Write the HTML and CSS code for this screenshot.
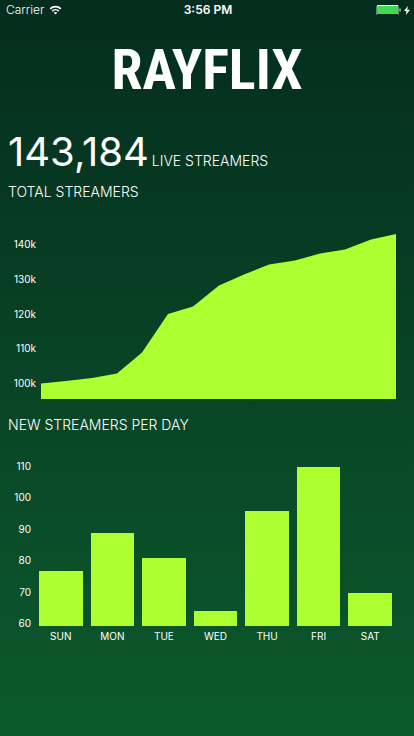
FILE: index.html
```html
<!DOCTYPE html>
<html lang="en">
<head>
<meta charset="utf-8">
<meta name="viewport" content="width=device-width, initial-scale=1">
<title>Rayflix</title>
<link rel="stylesheet" href="styles.css">
</head>
<body>
<header class="status">
  <div class="carrier">
    <span>Carrier</span>
    <svg class="wifi" viewBox="0 0 13 10" aria-hidden="true">
      <path d="M1.2 3.8a7.6 7.6 0 0 1 10.6 0M3.2 6.1a4.7 4.7 0 0 1 6.6 0" fill="none" stroke="#fff" stroke-width="1.7"/>
      <path d="M6.5 9.6 4.7 7.8a2.6 2.6 0 0 1 3.6 0z" fill="#fff"/>
    </svg>
  </div>
  <time class="clock">3:56 PM</time>
  <div class="power">
    <svg class="battery" viewBox="0 0 25 10" aria-hidden="true">
      <rect x="1" y="1" width="21" height="8" fill="#43d854"/>
      <path d="M1 .5h21" stroke="#fff"/>
      <path d="M.5 1v9M22.500 1v9" stroke="#fff" stroke-opacity=".4"/>
      <path d="M24 3.500v3" stroke="#fff"/>
    </svg>
    <svg class="bolt" viewBox="0 0 6 9" aria-hidden="true"><path d="M3.8 0 0 5h2.500L1.800 9 6 3.800H3.300z" fill="#fff"/></svg>
  </div>
</header>
<main>
  <h1 class="logo">RAYFLIX</h1>
  <p class="live"><strong class="count">143,184</strong><span>LIVE STREAMERS</span></p>
  <section>
    <h2>TOTAL STREAMERS</h2>
    <div class="chart total">
      <div class="axis"><span>140k</span><span>130k</span><span>120k</span><span>110k</span><span>100k</span></div>
      <svg class="area" viewBox="0 0 355 165" preserveAspectRatio="none" role="img" aria-label="Total streamers">
        <path d="M0 149.500 25 147 51 144 76 139.500 101 118.500 127 80 152 72.500 178 51.500 203 40.500 228 30.500 254 26.500 279 19.500 304 15.500 330 5.500 355 0V165H0z" fill="#adff2f"/>
      </svg>
    </div>
  </section>
  <section class="daily">
    <h2>NEW STREAMERS PER DAY</h2>
    <div class="chart">
      <div class="axis counts"><span>110</span><span>100</span><span>90</span><span>80</span><span>70</span><span>60</span></div>
      <div class="days">
        <div class="day"><div class="track"><div class="bar" style="height:34.600%"></div></div><span>SUN</span></div>
        <div class="day"><div class="track"><div class="bar" style="height:58.100%"></div></div><span>MON</span></div>
        <div class="day"><div class="track"><div class="bar" style="height:42.500%"></div></div><span>TUE</span></div>
        <div class="day"><div class="track"><div class="bar" style="height:9.200%"></div></div><span>WED</span></div>
        <div class="day"><div class="track"><div class="bar" style="height:71.900%"></div></div><span>THU</span></div>
        <div class="day"><div class="track"><div class="bar" style="height:99.600%"></div></div><span>FRI</span></div>
        <div class="day"><div class="track"><div class="bar" style="height:20.600%"></div></div><span>SAT</span></div>
      </div>
    </div>
  </section>
</main>
</body>
</html>
```
FILE: styles.css
```css
* { box-sizing: border-box; }
html { min-height: 100%; background: linear-gradient(#042d1e, #0c5a2c); }
body {
  margin: 0;
  color: #fff;
  font: 300 14px/20px Inter, "Liberation Sans", sans-serif;
}
h1, h2, p { margin: 0; font-weight: 300; }

.status {
  display: grid;
  grid-template-columns: 1fr auto 1fr;
  align-items: center;
  height: 20px;
  padding: 0 4px 0 6px;
  font-size: 12px;
}
.carrier { display: flex; align-items: center; gap: 5px; }
.wifi { width: 13px; height: 10px; }
.clock { font-weight: 600; }
.power { display: flex; align-items: center; justify-content: flex-end; gap: 3px; }
.battery { width: 25px; height: 10px; }
.bolt { width: 6px; height: 9px; }

.logo {
  padding-top: 16px;
  text-align: center;
  font: 700 56px/68px "Roboto Condensed", "Liberation Sans Narrow", sans-serif;
}
.live {
  display: flex;
  align-items: baseline;
  gap: 3px;
  padding: 27px 8px 0;
  line-height: 42px;
}
.count { font-size: 40px; font-weight: 400; }
h2 { padding: 0 8px; font-size: 14px; line-height: 20px; }

.chart { display: flex; }
.axis {
  display: flex;
  flex-direction: column;
  justify-content: space-between;
  text-align: right;
  font-size: 10px;
  font-weight: 400;
  line-height: 12px;
}
.total { padding: 32px 18px 0 0; }
.total .axis { width: 36px; margin: 4px 5px 10px 0; }
.area { flex: 1; min-width: 0; height: 165px; }

.daily { padding-top: 16px; }
.daily .chart { padding: 25px 22px 0 0; }
.counts { width: 31px; height: 169px; margin-right: 8px; }
.days {
  flex: 1;
  display: grid;
  grid-template-columns: repeat(7, 1fr);
  gap: 8px;
  padding-top: 6px;
  text-align: center;
  font-size: 10px;
  font-weight: 400;
  line-height: 20px;
}
.track { display: flex; align-items: flex-end; height: 160px; }
.bar { width: 100%; background: #adff2f; }
```
